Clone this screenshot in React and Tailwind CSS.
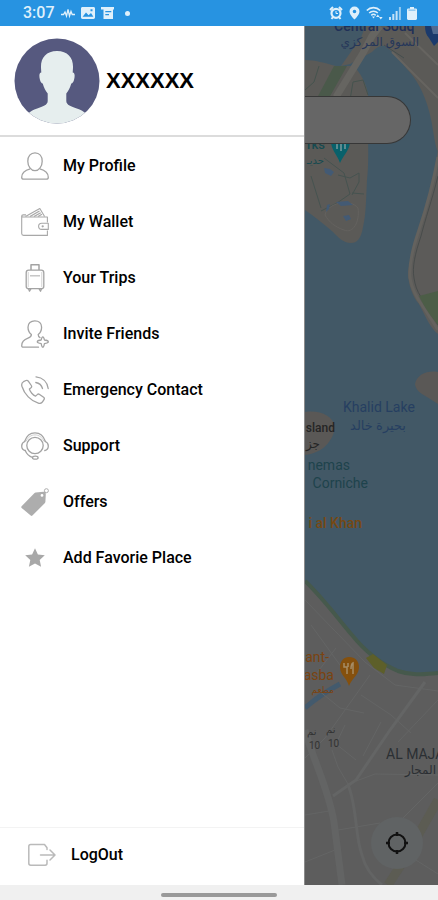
const ProfileIcon = () => (
  <svg viewBox="0 0 28 28" className="h-7 w-7" fill="none" stroke="#a3a3a3" strokeWidth="1.3" strokeLinejoin="round">
    <path d="M14 .8c4.400 0 7.200 3.400 7.200 8.400S18 18.600 14 18.600 6.800 14.200 6.800 9.200 9.600.8 14 .8z" />
    <path d="M9.200 16.800C4 18.200.7 21.200.7 25.200c0 1.200.8 2 2 2h22.600c1.200 0 2-.8 2-2 0-4-3.300-7-8.500-8.400" />
  </svg>
)

const WalletIcon = () => (
  <svg viewBox="0 0 28 28" className="h-7 w-7" fill="none" stroke="#a8a8a8" strokeWidth="1.100" strokeLinejoin="round">
    <path d="M26.400 14.500V9H2.200C1.200 9 .7 8.700.7 8.200v17.300c0 1.100.8 1.900 1.900 1.900h23.800v-5" />
    <path d="M.7 8.200c0-.8.600-1.300 1.500-1.300H5" />
    <path d="M4.500 8.500 18.800.5l4.800 8" />
    <path d="m9 8.500 9.500-5.500M13 8.500l6.700-3.800M17 8.500l4-2.200" strokeWidth="1.300" />
    <path d="M27.300 15.200h-6.600a3 3 0 0 0 0 6.200h6.600z" />
    <circle cx="21.700" cy="18.300" r=".6" />
  </svg>
)

const TripsIcon = () => (
  <svg viewBox="0 0 28 28" className="h-7 w-7" fill="none" stroke="#a3a3a3" strokeWidth="1.300" strokeLinejoin="round">
    <path d="M10 6V.8h8V6" strokeWidth="1.500" />
    <rect x="5.200" y="6.200" width="17.600" height="18.500" rx="2.500" />
    <path d="M7.300 8v15M20.700 8v15" stroke="#dedede" />
    <path d="M9 11.800h10" stroke="#bdbdbd" />
    <path d="m7.500 24.700 1 2.500 1.500-2.500M18 24.700l1.500 2.500 1-2.500" />
  </svg>
)

const InviteIcon = () => (
  <svg viewBox="0 0 28 28" className="h-7 w-7" fill="none" stroke="#a3a3a3" strokeWidth="1.300" strokeLinejoin="round" strokeLinecap="round">
    <path d="M17.500 27.200H2.200c-1 0-1.500-.6-1.500-1.500 0-4.700 2.600-6.200 6.300-7.500 2.400-.8 3.400-1.600 3.400-3.700C7.800 12.400 7 9.700 7 7.200 7 3.300 9.800.8 13.800.8s6.800 2.500 6.800 6.400c0 2.500-.8 5.200-3.400 7.300 0 1.600.5 2.500 1.800 3.100" />
    <path d="M21.800 16.800c.8 0 1.200 1 1.600 3.200 2.600.3 3.900.8 3.900 1.800s-1.300 1.500-3.900 1.800c-.4 2.500-.8 3.600-1.600 3.600s-1.200-1.100-1.600-3.600c-2.600-.3-3.900-.8-3.900-1.800s1.300-1.500 3.900-1.800c.4-2.200.8-3.200 1.600-3.200z" />
  </svg>
)

const EmergencyIcon = () => (
  <svg viewBox="0 0 28 28" className="h-7 w-7" fill="none" stroke="#a3a3a3" strokeWidth="1.300" strokeLinejoin="round" strokeLinecap="round">
    <path d="M2.500 5.700 5 4.500c.9-.4 1.700-.2 2.300.7l3 4.300c.5.800.4 1.700-.3 2.300l-1.600 1.300c.6 2.600 3.600 6 6.200 7l1.600-1.500c.7-.7 1.600-.8 2.400-.2l4 2.900c.8.600.9 1.500.4 2.300l-1.500 2.300c-1 1.500-2.600 1.700-4.200 1.200C9.800 25 3.400 18.300.9 10.200.4 8.300.8 6.600 2.500 5.700z" />
    <path d="M14.800 6.500c3.500.6 5.800 2.800 6.700 6" />
    <path d="M15 .9c6.600.7 11.300 5.200 12.200 11.600" />
  </svg>
)

const SupportIcon = () => (
  <svg viewBox="0 0 28 28" className="h-7 w-7" fill="none" stroke="#a3a3a3" strokeWidth="1.300" strokeLinejoin="round" strokeLinecap="round">
    <circle cx="14" cy="13.500" r="8.200" />
    <path d="M3.600 9.500C5.300 4.300 9.300.8 14 .8s8.700 3.500 10.400 8.700" />
    <path d="M5.200 9C6.900 5.200 10.100 2.900 14 2.900S21.100 5.200 22.800 9" stroke="#cfcfcf" strokeWidth="1" />
    <path d="M3.800 9.500C1.800 10.200.7 11.700.7 14s1.200 4 3.500 4.500" />
    <path d="M24.200 9.500c2 .7 3.100 2.200 3.100 4.500s-1.200 4-3.500 4.500" />
    <path d="M4.200 18.500c1.500 3.500 4 5.900 7.200 6.800" />
    <ellipse cx="14.300" cy="25.700" rx="2.800" ry="1.500" />
  </svg>
)

const OffersIcon = () => (
  <svg viewBox="0 0 28 28" className="h-7 w-7">
    <path
      fill="#adadad"
      fillRule="evenodd"
      d="M.6 18.300 13.300 5.200c.4-.4.9-.6 1.500-.7l7.500-.8c1.600-.2 2.600.8 2.500 2.300l-.4 7.800c0 .6-.3 1.100-.7 1.500L11.400 27.500c-.5.500-1.200.5-1.700 0L.6 19.900c-.5-.5-.5-1.100 0-1.600zM21 6a1.400 1.400 0 1 0 0 2.800A1.400 1.400 0 0 0 21 6z"
    />
    <circle cx="25.400" cy="2.700" r="2" fill="none" stroke="#adadad" />
  </svg>
)

const StarIcon = () => (
  <svg viewBox="0 0 28 28" className="h-7 w-7">
    <path fill="#a8a8a8" d="m14 4.200 2.900 6.300 6.900.8-5.100 4.700 1.400 6.800-6.100-3.400-6.100 3.400L9.300 16l-5.100-4.700 6.900-.8z" />
  </svg>
)

const LogoutIcon = () => (
  <svg viewBox="0 0 28 24" className="h-6 w-7" fill="none" stroke="#bababa" strokeWidth="1.500" strokeLinejoin="round" strokeLinecap="round">
    <path d="M19 6.500V4.700L16.500 1.500H2.700c-1.100 0-1.900.8-1.900 1.900v16.900c0 1.100.8 1.900 1.900 1.900h14.500c1.100 0 1.800-.8 1.800-1.900v-3" />
    <path d="M12.500 12h14M22 7l5 5-5 5" />
  </svg>
)

const Avatar = () => (
  <svg viewBox="0 0 86 86" className="h-[86px] w-[86px] shrink-0">
    <clipPath id="avatar">
      <circle cx="43" cy="43" r="42.500" />
    </clipPath>
    <g clipPath="url(#avatar)">
      <path fill="#56597f" d="M0 0h86v86H0z" />
      <path
        fill="#e6eeee"
        d="M43 13c11 0 16.500 7 16 17l-.3 4.500c2.300.3 2.300 3.500 1.300 7.500-.6 2.300-1.700 3.500-2.700 3.500-1.200 4.500-3 7.500-5 10v7.500c0 4 5 5.600 10.500 7.500 4 1.500 7 2.800 9.500 5.500L74 90H12l1.700-14c2.500-2.700 5.500-4 9.500-5.500 5.500-1.900 10.500-3.500 10.500-7.500v-7.500c-2-2.500-3.800-5.500-5-10-1 0-2.100-1.200-2.700-3.500-1-4-1-7.200 1.300-7.500L27 30c-.5-10 5-17 16-17z"
      />
    </g>
  </svg>
)

const StatusBar = () => (
  <header className="flex h-[26px] shrink-0 items-center justify-between bg-[#2793e1] pl-[23px] pr-[21px] text-[#dff0fb]">
    <div className="flex items-center gap-[6px]">
      <span className="text-base font-medium leading-[26px]">3:07</span>
      <svg viewBox="0 0 14 12" className="h-3 w-[14px]" fill="none" stroke="currentColor" strokeWidth="1.300">
        <path d="M0 7.500h2.500L4 5l1.500 4L7 2.500 8.500 9 10 4.500l1.200 3H14" />
      </svg>
      <svg viewBox="0 0 14 12" className="h-3 w-[14px]">
        <path fill="currentColor" fillRule="evenodd" d="M1.500 0h11c.8 0 1.500.6 1.500 1.400v9.200c0 .8-.7 1.400-1.500 1.400h-11C.7 12 0 11.400 0 10.600V1.400C0 .6.7 0 1.500 0zM1.600 9.800 5 5.500l2.600 2.800L10 6l2.400 3.800zM9.500 2.200h2v2h-2z" />
      </svg>
      <svg viewBox="0 0 14 12" className="h-3 w-[14px]">
        <path fill="currentColor" fillRule="evenodd" d="M0 0h13v2.500h-1V12H2.500V2.500H0zM4.300 4v1.300h6V4zm0 3v1.300H8V7z" />
      </svg>
      <span className="ml-1 h-[5px] w-[5px] rounded-full bg-current" />
    </div>
    <div className="flex items-center gap-[6px]">
      <svg viewBox="0 0 14 14" className="h-[14px] w-[14px]">
        <path d="M1 4 4 1M13 4l-3-3M2.500 13 4 11M11.500 13 10 11" stroke="currentColor" strokeWidth="2" />
        <circle cx="7" cy="7.300" r="4.500" fill="none" stroke="currentColor" strokeWidth="2.200" />
        <path d="M7 5v2.500h2" fill="none" stroke="currentColor" />
      </svg>
      <svg viewBox="0 0 11 14" className="h-[14px] w-[11px]">
        <path fill="currentColor" fillRule="evenodd" d="M5.500.5a5 5 0 0 1 5 5c0 3.500-5 8-5 8s-5-4.500-5-8a5 5 0 0 1 5-5zm0 3.200a1.800 1.800 0 1 0 0 3.600 1.800 1.800 0 0 0 0-3.600z" />
      </svg>
      <svg viewBox="0 0 17 14" className="h-[14px] w-[17px]" fill="none" stroke="currentColor" strokeWidth="1.600">
        <path d="M.8 4.500c3.700-3.800 9.700-3.800 13.400 0M3.200 7c2.400-2.300 6.200-2.300 8.600 0M5.300 9.300c1.300-1.200 3.100-1.200 4.400 0" />
        <path fill="currentColor" stroke="none" d="M6 10.500h3l-1.500 2zM10 11l1.800-2.500 1.800 2.500zM13 11h3.600l-1.800 2.500z" />
      </svg>
      <svg viewBox="0 0 12 13" className="h-[13px] w-3" fill="currentColor">
        <path d="M0 10h2v3H0zM3.300 7h2v6h-2zM6.600 4h2v9h-2z" opacity=".85" />
        <path d="M9.900 0h2v13h-2z" opacity=".6" />
      </svg>
      <svg viewBox="0 0 10 13" className="h-[13px] w-[10px]">
        <path fill="currentColor" d="M3 0h4v1.500h1.500c.8 0 1.500.5 1.500 1.300v9c0 .7-.6 1.200-1.300 1.200H1.300C.6 13 0 12.500 0 11.800v-9c0-.8.700-1.300 1.500-1.300H3z" />
        <path fill="#2793e1" d="M1.500 2.500h7v1.300h-7z" opacity=".5" />
      </svg>
    </div>
  </header>
)

const MapDrawing = () => (
  <svg
    viewBox="305 26 133 859"
    preserveAspectRatio="xMinYMin slice"
    className="absolute inset-0 h-full w-full font-[Roboto,'DejaVu_Sans',sans-serif]"
  >
    <path fill="#425866" d="M305 26h133v859H305z" />

    {/* northern shore and bridge */}
    <path fill="#5b5a57" d="M305 60c10 0 20 3 31 6h18c6 7 12 16 14 28v36c0 12 1 34-1 50-1 20-1 35-4 47-2 12-6 16-12 16-8 0-13-6-18-11-9-8-18-15-28-22z" />
    <path fill="#5b5a57" d="M365 26h73v126c-4-8-5-28-9-41-5-19-13-33-23-43-6-8-13-16-21-22-5-1-9 2-13 6l-22 12-9 2 14-20c6-6 8-13 10-20z" />
    <path fill="#4a594a" d="M334 66h13l-18 32h-12z" />
    <path fill="none" stroke="#666561" strokeWidth="7" d="m336 97 27-44 9-17 8-10" />
    <path fill="none" stroke="#45534e" strokeWidth="1" d="m305 90 9-8 5-16M350 100l3-18 10-2 5 15" />
    <path fill="none" stroke="#666460" strokeWidth="2" d="m392 52 46 46M405 33l33 32" />
    <path fill="none" stroke="#454e4e" strokeWidth="1" d="m384 45 20 13" />

    {/* park paths and ponds */}
    <g fill="none" stroke="#465350" strokeWidth="1">
      <path d="m311 176 10 32M324 158l20 15 6 21-13 9-16 8M338 175l12 3 9-5v9l-7 13M352 193l12 1" />
      <path d="M325 215c2-12 25-17 33-7 2 14-5 26-14 22-9-3-15-8-19-15z" stroke="#64625f" />
    </g>
    <path fill="#435a74" d="m324 168 6 1 4 3-3 4-6-3zM336 202l12-1 5 4-12 1zM343 216l6-1 2 4-5 2zM327 205l3-1-1 5-3 3z" />

    {/* eastern shore */}
    <path fill="#5c5b59" d="M438 150c-3 18-7 40-14 62-7 23-14 46-16 60 0 13 5 25 11 32 6 11 11 24 19 30z" />
    <path fill="none" stroke="#64625e" strokeWidth="3" d="M438 157c-5 27-12 52-19 73-7 20-10 36-9 48 2 12 8 22 14 30l14 22" />
    <path fill="none" stroke="#484c4b" strokeWidth="1" d="M438 176c-6 24-13 44-17 60-6 18-9 31-7 42 1 7 3 13 7 19l17 28" />
    <path fill="#4c5d47" d="m419 296 19-5v34c-6-7-14-18-19-29z" />
    <path fill="#5a5856" d="M438 372c-10-2-21 2-23 12 1 9 10 11 23 20z" />
    <path fill="#5a5856" d="M305 412c16-2 27 4 30 14-1 14-12 27-30 29z" />

    {/* southern shore and streets */}
    <path fill="#5d5d5d" d="M305 583c16 15 31 35 47 53 12 15 26 28 45 36 14 5 27 3 41 2v211H305z" />
    <path fill="none" stroke="#46594c" strokeWidth="4" d="M305 581c16 15 31 35 47 54 12 15 27 28 46 36 14 5 27 3 40 2" />
    <path fill="#5d5f2a" d="m366 658 7-4 14 11-3 9-10-6z" />
    <path fill="none" stroke="#435a6d" strokeWidth="5" d="M305 708c10-9 18-15 35-24" />
    <g fill="none" stroke="#646565" strokeWidth="2">
      <path d="m305 600 60 62 30 23 43 6M311 625l34 47M336 648l-20 26M370 675l-45 63-20 20M361 695l30 20 20 18M438 700l-40 42M345 725l-9 19 20 16M318 690l22 18 24 5" strokeWidth="1" />
      <path d="m425 682-35 48-34 50-23 16" strokeWidth="3" />
      <path d="m332 750 6 17 10 17 27-10 63 1M338 830l42-7M305 815l30-5M438 783l-52 52M305 862l35-14M400 850l38 24M381 722l-18 34" strokeWidth="1" />
      <path d="M305 730c8 30 23 57 29 92l8 63" strokeWidth="7" stroke="#636464" />
      <path d="M348 785c9 20 7 52 14 70 3 12 10 22 20 30" strokeWidth="3" stroke="#636464" />
      <path d="m438 800-35 62-15 23" strokeWidth="9" stroke="#5c5c53" />
    </g>

    {/* place labels */}
    <g fontSize="13" fontWeight="500">
      <text x="334" y="31" fontSize="14" fill="#1f3058">Central Souq</text>
      <text x="419" y="46" fontSize="12" fill="#26375a" textAnchor="end">السوق المركزي</text>
      <text x="325" y="149" fill="#154a50" textAnchor="end">rks</text>
      <text x="324" y="164" fontSize="10" fill="#154a50" textAnchor="end">حديـ</text>
      <text x="343" y="412" fontSize="14" fontWeight="400" fill="#263f61">Khalid Lake</text>
      <text x="406" y="430" fontSize="13" fontWeight="400" fill="#263f61" textAnchor="end">بحيرة خالد</text>
      <text x="335" y="432" fontSize="12" fill="#252525" textAnchor="end">sland</text>
      <text x="320" y="448" fontSize="12" fill="#252525" textAnchor="end">جز</text>
      <text x="350" y="470" fontWeight="400" fontSize="14" fill="#1e434c" textAnchor="end">nemas</text>
      <text x="368" y="488" fontWeight="400" fontSize="14" fill="#1e434c" textAnchor="end">Corniche</text>
      <text x="362" y="528" fontSize="14" fill="#764913" textAnchor="end">i al Khan</text>
      <text x="329" y="662" fontWeight="400" fontSize="14" fill="#7b4310" textAnchor="end">ant-</text>
      <text x="334" y="680" fontWeight="400" fontSize="14" fill="#7b4310" textAnchor="end">asba</text>
      <text x="334" y="693" fontSize="9" fill="#7b4310" textAnchor="end">مطعم</text>
      <text x="386" y="759" fontSize="14" fontWeight="400" fill="#2b2f33">AL MAJA</text>
      <text x="436" y="774" fontSize="12" fontWeight="400" fill="#2b2f33" textAnchor="end">المجار</text>
      <g fontSize="10" fontWeight="400" fill="#333">
        <text x="307" y="735">نم</text>
        <text x="309" y="749">10</text>
        <text x="326" y="733">نم</text>
        <text x="328" y="747">10</text>
      </g>
    </g>

    {/* pins */}
    <path fill="#1b3a6c" d="M425 26h13v16l-4 4-5-8c-3-3-4-7-4-12z" />
    <path fill="#506a90" d="M431 26h7v8h-5z" />
    <path fill="#08616b" d="M331 141c0 9 6 13 9 22 4-9 10-13 10-22z" />
    <path fill="none" stroke="#5d8b90" strokeWidth="2" d="M337 143v6M341 143v8M345 143v6" />
    <path fill="#85500d" d="M349 657c6 0 10 4 10 10 0 8-7 11-10 19-2-8-9-11-9-19 0-6 4-10 9-10z" />
    <path fill="none" stroke="#a58c66" strokeWidth="1.500" d="M344 663v4h3v7M348 663v4M353 674v-11c-2 1-2 4-2 6" />
  </svg>
)

const menuItems = [
  { label: "My Profile", icon: ProfileIcon },
  { label: "My Wallet", icon: WalletIcon },
  { label: "Your Trips", icon: TripsIcon },
  { label: "Invite Friends", icon: InviteIcon },
  { label: "Emergency Contact", icon: EmergencyIcon },
  { label: "Support", icon: SupportIcon },
  { label: "Offers", icon: OffersIcon },
  { label: "Add Favorie Place", icon: StarIcon },
]

export default function App() {
  return (
    <div className="flex min-h-screen flex-col bg-white font-[Roboto,sans-serif] text-black">
      <StatusBar />

      <main className="flex flex-1">
        <aside className="flex w-[305px] shrink-0 flex-col border-r border-[#8b8b8b] bg-white">
          <div className="flex items-center gap-[6px] border-b-2 border-[#dcdcdc] px-[14px] pt-3 pb-[11px]">
            <Avatar />
            <h1 className="font-['Liberation_Sans',sans-serif] text-[22px] font-bold leading-7">XXXXXX</h1>
          </div>

          <nav className="flex-1 pt-px">
            <ul>
              {menuItems.map(({ label, icon: Icon }) => (
                <li key={label}>
                  <a href="#" className="flex h-14 items-center gap-[14px] px-[21px] text-base font-medium leading-6">
                    <Icon />
                    {label}
                  </a>
                </li>
              ))}
            </ul>
          </nav>

          <button type="button" className="flex h-[58px] items-center gap-[15px] border-t border-[#f3f3f3] px-7 pb-1 text-left text-base font-medium leading-6">
            <LogoutIcon />
            LogOut
          </button>
        </aside>

        <section className="relative flex flex-1 flex-col overflow-hidden">
          <MapDrawing />
          <div className="relative flex flex-1 flex-col items-end justify-between pb-4 pr-[15px] pt-[70px]">
            <div className="w-full pr-3">
              <input
                type="text"
                aria-label="Search"
                className="h-12 w-full rounded-r-full border border-l-0 border-[#373737] bg-[#666] px-4 text-black outline-none"
              />
            </div>
            <button
              type="button"
              aria-label="My location"
              className="flex h-[52px] w-[52px] items-center justify-center rounded-full bg-[#606364]"
            >
              <svg viewBox="0 0 24 24" className="h-6 w-6" fill="none" stroke="#111" strokeWidth="2">
                <circle cx="12" cy="12" r="8.500" />
                <path d="M12 1v4M12 19v4M1 12h4M19 12h4" strokeWidth="2.500" />
              </svg>
            </button>
          </div>
        </section>
      </main>

      <footer className="flex h-[15px] shrink-0 items-center justify-center bg-[#f0f0f0] pt-1">
        <span className="h-1 w-[116px] rounded-full bg-[#999]" />
      </footer>
    </div>
  )
}
